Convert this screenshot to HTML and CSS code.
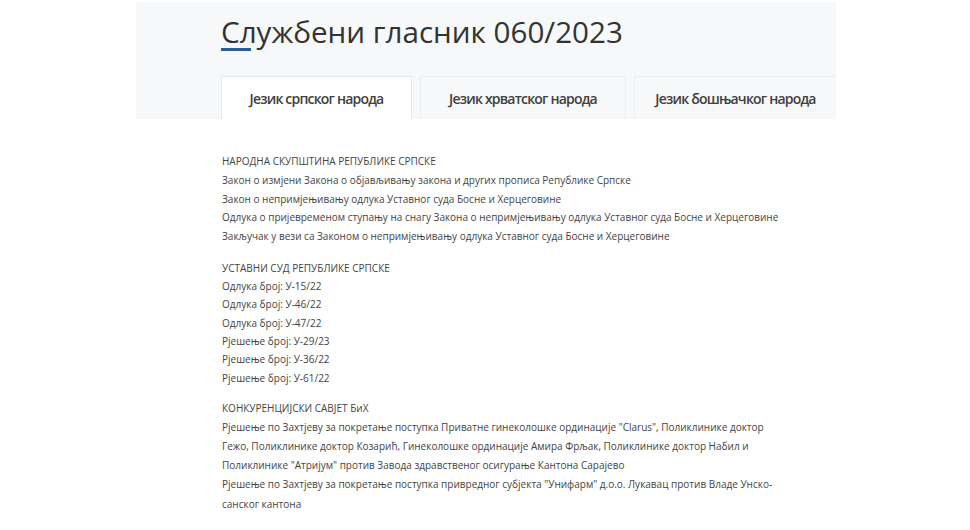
FILE: index.html
```html
<!DOCTYPE html>
<html lang="sr">
<head>
<meta charset="utf-8">
<link rel="stylesheet" href="styles.css">
</head>
<body>
<div class="page">
  <header class="band">
    <h1 class="title">Службени гласник 060/2023</h1>
    <nav class="tabs">
      <div class="tab active">Језик српског народа</div>
      <div class="tab">Језик хрватског народа</div>
      <div class="tab last">Језик бошњачког народа</div>
    </nav>
  </header>
  <main class="content">
    <section class="group g1">
      <div class="head">НАРОДНА СКУПШТИНА РЕПУБЛИКЕ СРПСКЕ</div>
      <div class="item">Закон о измјени Закона о објављивању закона и других прописа Републике Српске</div>
      <div class="item">Закон о непримјењивању одлука Уставног суда Босне и Херцеговине</div>
      <div class="item">Одлука о пријевременом ступању на снагу Закона о непримјењивању одлука Уставног суда Босне и Херцеговине</div>
      <div class="item">Закључак у вези са Законом о непримјењивању одлука Уставног суда Босне и Херцеговине</div>
    </section>
    <section class="group g2">
      <div class="head">УСТАВНИ СУД РЕПУБЛИКЕ СРПСКЕ</div>
      <div class="item">Одлука број: У-15/22</div>
      <div class="item">Одлука број: У-46/22</div>
      <div class="item">Одлука број: У-47/22</div>
      <div class="item">Рјешење број: У-29/23</div>
      <div class="item">Рјешење број: У-36/22</div>
      <div class="item">Рјешење број: У-61/22</div>
    </section>
    <section class="group g3">
      <div class="head">КОНКУРЕНЦИЈСКИ САВЈЕТ БиХ</div>
      <div class="item">Рјешење по Захтјеву за покретање поступка Приватне гинеколошке ординације "Clarus", Поликлинике доктор Гежо, Поликлинике доктор Козарић, Гинеколошке ординације Амира Фрљак, Поликлинике доктор Набил и Поликлинике "Атријум" против Завода здравственог осигурање Кантона Сарајево</div>
      <div class="item">Рјешење по Захтјеву за покретање поступка привредног субјекта "Унифарм" д.о.о. Лукавац против Владе Унско-санског кантона</div>
    </section>
  </main>
</div>
</body>
</html>
```
FILE: styles.css
```css
html, body {
  margin: 0;
  padding: 0;
  background: #ffffff;
}
body {
  font-family: "Open Sans", "Noto Sans", sans-serif;
  color: #444;
}
.page {
  width: 700px;
  margin-left: 136px;
}
.band {
  background: #f7f8fa;
  margin-top: 2px;
  padding: 0 0 0 85px;
  display: flex;
  flex-direction: column;
}
.title {
  margin: 0;
  padding-top: 10px;
  font-size: 29.6px;
  font-weight: 400;
  line-height: 40px;
  color: #333;
  align-self: flex-start;
}
.title::after {
  content: "";
  display: block;
  width: 30px;
  height: 3px;
  background: #2d5a9a;
  margin-top: -4px;
}
.tabs {
  display: flex;
  gap: 8px;
  margin-top: 25px;
}
.tab {
  height: 43px;
  box-sizing: border-box;
  display: flex;
  align-items: center;
  justify-content: center;
  font-size: 14px;
  font-weight: 600;
  letter-spacing: -0.8px;
  color: #404040;
  border: 1px solid #edeef0;
  border-bottom: none;
  background: #f7f8fa;
}
.tab.active {
  width: 191px;
  background: #ffffff;
  border-color: #e6e8eb;
}
.tab:nth-child(2) {
  width: 206px;
}
.tab.last {
  flex: 1;
  border-right: none;
}
.content {
  padding: 33px 0 0 86px;
  width: 570px;
  font-size: 10px;
  color: #444;
}
.g1 { line-height: 18.75px; margin-bottom: 13px; }
.g2 { line-height: 18.35px; margin-bottom: 11.5px; }
.g3 { line-height: 19.2px; }
.head, .item {
  margin: 0;
}
```
